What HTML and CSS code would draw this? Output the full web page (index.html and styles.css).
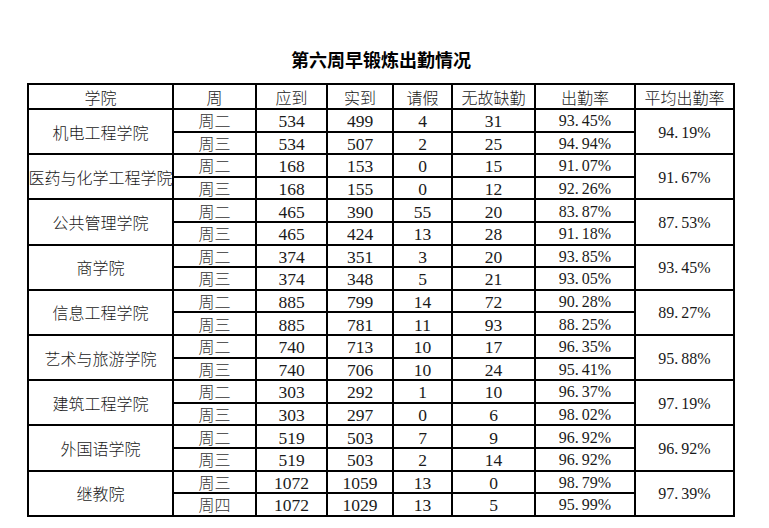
FILE: index.html
```html
<!DOCTYPE html>
<html lang="zh">
<head>
<meta charset="utf-8">
<link rel="stylesheet" href="styles.css">
</head>
<body>
<div class="page">
  <h1 class="title">第六周早锻炼出勤情况</h1>
  <div class="sheet">
    <div class="h">学院</div><div class="h">周</div><div class="h">应到</div><div class="h">实到</div><div class="h">请假</div><div class="h">无故缺勤</div><div class="h">出勤率</div><div class="h">平均出勤率</div>

    <div class="col">机电工程学院</div><div class="wk">周二</div><div class="n">534</div><div class="n">499</div><div class="n">4</div><div class="n">31</div><div class="p">93<span class="dot">.</span>45%</div><div class="avg p">94<span class="dot">.</span>19%</div>
    <div class="wk">周三</div><div class="n">534</div><div class="n">507</div><div class="n">2</div><div class="n">25</div><div class="p">94<span class="dot">.</span>94%</div>

    <div class="col">医药与化学工程学院</div><div class="wk">周二</div><div class="n">168</div><div class="n">153</div><div class="n">0</div><div class="n">15</div><div class="p">91<span class="dot">.</span>07%</div><div class="avg p">91<span class="dot">.</span>67%</div>
    <div class="wk">周三</div><div class="n">168</div><div class="n">155</div><div class="n">0</div><div class="n">12</div><div class="p">92<span class="dot">.</span>26%</div>

    <div class="col">公共管理学院</div><div class="wk">周二</div><div class="n">465</div><div class="n">390</div><div class="n">55</div><div class="n">20</div><div class="p">83<span class="dot">.</span>87%</div><div class="avg p">87<span class="dot">.</span>53%</div>
    <div class="wk">周三</div><div class="n">465</div><div class="n">424</div><div class="n">13</div><div class="n">28</div><div class="p">91<span class="dot">.</span>18%</div>

    <div class="col">商学院</div><div class="wk">周二</div><div class="n">374</div><div class="n">351</div><div class="n">3</div><div class="n">20</div><div class="p">93<span class="dot">.</span>85%</div><div class="avg p">93<span class="dot">.</span>45%</div>
    <div class="wk">周三</div><div class="n">374</div><div class="n">348</div><div class="n">5</div><div class="n">21</div><div class="p">93<span class="dot">.</span>05%</div>

    <div class="col">信息工程学院</div><div class="wk">周二</div><div class="n">885</div><div class="n">799</div><div class="n">14</div><div class="n">72</div><div class="p">90<span class="dot">.</span>28%</div><div class="avg p">89<span class="dot">.</span>27%</div>
    <div class="wk">周三</div><div class="n">885</div><div class="n">781</div><div class="n">11</div><div class="n">93</div><div class="p">88<span class="dot">.</span>25%</div>

    <div class="col">艺术与旅游学院</div><div class="wk">周二</div><div class="n">740</div><div class="n">713</div><div class="n">10</div><div class="n">17</div><div class="p">96<span class="dot">.</span>35%</div><div class="avg p">95<span class="dot">.</span>88%</div>
    <div class="wk">周三</div><div class="n">740</div><div class="n">706</div><div class="n">10</div><div class="n">24</div><div class="p">95<span class="dot">.</span>41%</div>

    <div class="col">建筑工程学院</div><div class="wk">周二</div><div class="n">303</div><div class="n">292</div><div class="n">1</div><div class="n">10</div><div class="p">96<span class="dot">.</span>37%</div><div class="avg p">97<span class="dot">.</span>19%</div>
    <div class="wk">周三</div><div class="n">303</div><div class="n">297</div><div class="n">0</div><div class="n">6</div><div class="p">98<span class="dot">.</span>02%</div>

    <div class="col">外国语学院</div><div class="wk">周二</div><div class="n">519</div><div class="n">503</div><div class="n">7</div><div class="n">9</div><div class="p">96<span class="dot">.</span>92%</div><div class="avg p">96<span class="dot">.</span>92%</div>
    <div class="wk">周三</div><div class="n">519</div><div class="n">503</div><div class="n">2</div><div class="n">14</div><div class="p">96<span class="dot">.</span>92%</div>

    <div class="col">继教院</div><div class="wk">周三</div><div class="n">1072</div><div class="n">1059</div><div class="n">13</div><div class="n">0</div><div class="p">98<span class="dot">.</span>79%</div><div class="avg p">97<span class="dot">.</span>39%</div>
    <div class="wk">周四</div><div class="n">1072</div><div class="n">1029</div><div class="n">13</div><div class="n">5</div><div class="p">95<span class="dot">.</span>99%</div>
  </div>
</div>
</body>
</html>
```
FILE: styles.css
```css
html, body {
  margin: 0;
  padding: 0;
  background: #ffffff;
}

.page {
  width: 708px;
  margin-left: 27px;
  color: #1a1a1a;
}

.title {
  margin: 0;
  padding-top: 46px;
  height: 26px;
  margin-bottom: 11px;
  line-height: 26px;
  font-family: "Noto Sans CJK SC", sans-serif;
  font-size: 18px;
  font-weight: 700;
  text-align: center;
  color: #000;
}

.sheet {
  display: grid;
  grid-template-columns: 143px 81px 69px 64px 57px 81px 98px 97px;
  grid-template-rows: 23px repeat(18, 20.6px);
  gap: 2px;
  padding: 2px;
  background: #000;
  width: 704px;
}

.sheet > div {
  background: #fff;
  display: flex;
  align-items: center;
  justify-content: center;
  white-space: nowrap;
  min-height: 0;
}

.h, .col, .wk {
  font-family: "Noto Sans CJK SC", sans-serif;
  font-weight: 300;
  font-size: 16px;
  line-height: 18px;
}

.h {
  padding-top: 1px;
}

.col {
  grid-row: span 2;
}

.wk {
  color: #333;
}

.n {
  font-family: "Liberation Serif", serif;
  font-size: 17.5px;
  line-height: 18px;
  padding-top: 2px;
}

.p {
  font-family: "Liberation Serif", serif;
  font-size: 16px;
  line-height: 18px;
  padding-top: 2px;
}

.dot {
  margin-right: 3px;
}

.avg {
  grid-row: span 2;
}
```
